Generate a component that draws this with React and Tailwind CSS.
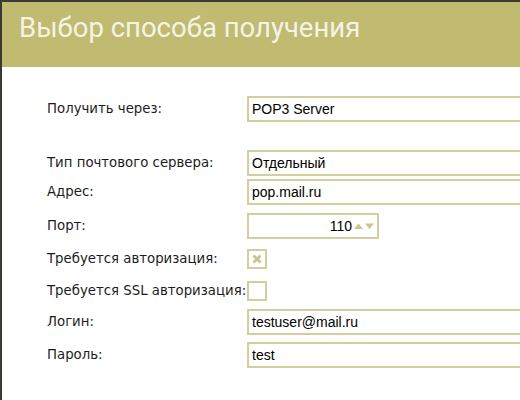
const Field = ({ children, className = "" }) => (
  <div
    className={`h-[26px] shrink-0 border-2 border-[#d3ce9d] bg-white flex items-center px-[3px] text-[14px] text-black ${className}`}
  >
    {children}
  </div>
);

const Row = ({ label, children, className = "" }) => (
  <div className={`flex items-center ${className}`}>
    <div
      className="w-[200px] shrink-0 text-[13.3px] text-[#1c1c1c] whitespace-nowrap"
      style={{ fontFamily: '"DejaVu Sans", Verdana, sans-serif' }}
    >
      {label}
    </div>
    {children}
  </div>
);

const Check = ({ checked }) => (
  <div className="w-[20px] h-[20px] shrink-0 border-2 border-[#d3ce9d] bg-white flex items-center justify-center">
    {checked && (
      <svg width="10" height="10" viewBox="0 0 10 10">
        <path d="M1.5 1.5 L8.5 8.5 M8.5 1.5 L1.5 8.5" stroke="#c9c38b" strokeWidth="2.6" />
      </svg>
    )}
  </div>
);

export default function App() {
  return (
    <div
      className="w-[520px] h-[400px] overflow-hidden bg-white border-l-2 border-t-2 border-[#3a3a33]"
      style={{ fontFamily: '"Liberation Sans", Arial, sans-serif' }}
    >
      {/* Header */}
      <div className="h-[65px] bg-[#c1ba71] pl-[17px] pt-[8px]">
        <h1
          className="text-[27.5px] text-[#f5f3e6] leading-[36px]"
          style={{ fontFamily: 'Roboto, "Liberation Sans", sans-serif' }}
        >
          Выбор способа получения
        </h1>
      </div>

      <div className="pl-[45px] pt-[29px]">
        <Row label="Получить через:">
          <Field className="w-[300px]">POP3 Server</Field>
        </Row>

        <Row label="Тип почтового сервера:" className="mt-[28px]">
          <Field className="w-[300px]">Отдельный</Field>
        </Row>
        <Row label="Адрес:" className="mt-[3px]">
          <Field className="w-[300px]">pop.mail.ru</Field>
        </Row>
        <Row label="Порт:" className="mt-[8px]">
          <Field className="w-[132px] justify-end pr-[2px]">
            <span>110</span>
            <svg width="22" height="8" viewBox="0 0 22 8" className="ml-[1px]">
              <path d="M1 7 L5.5 1.5 L10 7 Z" fill="#cbc58f" />
              <path d="M12 1.5 L21 1.5 L16.5 7 Z" fill="#cbc58f" />
            </svg>
          </Field>
        </Row>
        <Row label="Требуется авторизация:" className="mt-[10px]">
          <Check checked />
        </Row>
        <Row label="Требуется SSL авторизация:" className="mt-[12px]">
          <Check />
        </Row>
        <Row label="Логин:" className="mt-[8px]">
          <Field className="w-[300px] h-[25px]">testuser@mail.ru</Field>
        </Row>
        <Row label="Пароль:" className="mt-[7px]">
          <Field className="w-[300px] h-[25px]">test</Field>
        </Row>
      </div>
    </div>
  );
}
